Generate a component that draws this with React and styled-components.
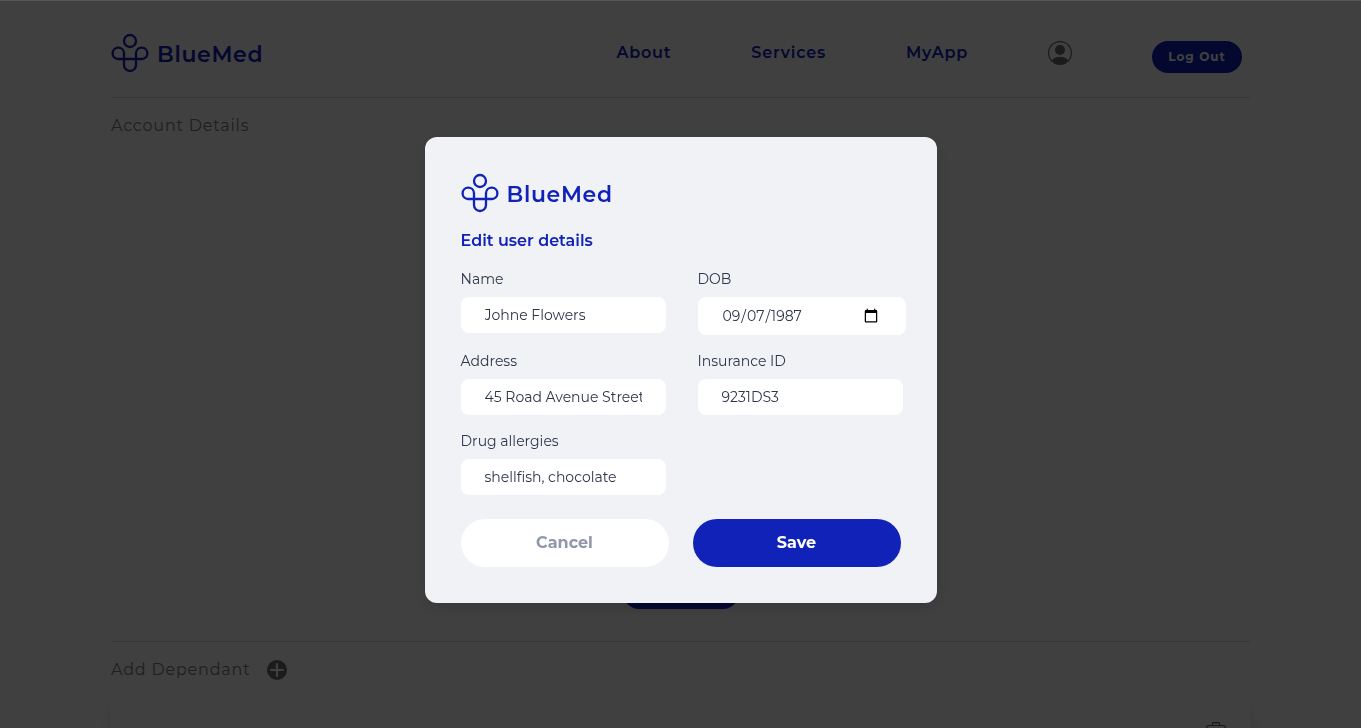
import React from "react";
import styled, { createGlobalStyle } from "styled-components";

const blue = "#1122b9";

const GlobalStyle = createGlobalStyle`
  *, *::before, *::after { box-sizing: border-box; }
  html, body { margin: 0; }
  body {
    background: #ffffff;
    color: #7c7c7c;
    font-family: Montserrat, Inter, "Liberation Sans", sans-serif;
    height: 100vh;
    overflow: hidden;
  }
  button, input { font-family: inherit; }
`;

const Page = styled.div`
  max-width: 1139px;
  margin: 0 auto;
`;

const Header = styled.header`
  display: flex;
  justify-content: space-between;
  align-items: center;
  height: 98px;
  padding: 8px 8px 0 0;
  border-bottom: 1px solid #dcdcdc;
`;

const Brand = styled.a`
  display: flex;
  align-items: center;
  gap: 8px;
  height: 40px;
  width: fit-content;
  color: ${blue};
  font-size: 22px;
  font-weight: 600;
  line-height: 28px;
  letter-spacing: 0.03em;
  text-decoration: none;
`;

const BrandName = styled.span`
  padding-top: 4px;
`;

const Nav = styled.nav`
  display: flex;
  align-items: center;
  gap: 80px;
`;

const NavLink = styled.a`
  display: flex;
  color: ${blue};
  font-size: 16px;
  font-weight: 600;
  letter-spacing: 0.05em;
  text-decoration: none;
`;

const LogOut = styled.button`
  width: 90px;
  height: 32px;
  margin-top: 8px;
  padding: 0;
  border: 0;
  border-radius: 16px;
  background: ${blue};
  color: #ffffff;
  font-size: 12px;
  font-weight: 700;
  letter-spacing: 1px;
`;

const Section = styled.section`
  display: flex;
  flex-direction: column;
  height: ${(p) => p.$height};
  border-bottom: ${(p) => (p.$ruled ? "1px solid #dcdcdc" : "0")};
`;

const SectionTitle = styled.h2`
  display: flex;
  align-items: center;
  gap: 16px;
  height: 56px;
  margin: 0;
  font-size: 16px;
  font-weight: 400;
  line-height: 20px;
  letter-spacing: 0.05em;
`;

const IconButton = styled.button`
  display: flex;
  padding: 0;
  border: 0;
  background: none;
  color: #6b6b6b;
`;

const EditButton = styled.button`
  width: 116px;
  height: 32px;
  margin: auto auto 32px;
  border: 0;
  border-radius: 16px;
  background: ${blue};
  color: #ffffff;
  font-size: 12px;
  font-weight: 700;
`;

const Card = styled.article`
  display: flex;
  justify-content: flex-end;
  height: 160px;
  padding: 24px;
  border-radius: 10px;
  box-shadow: 0 8px 14px rgba(0, 0, 0, 0.12);
`;

const Overlay = styled.div`
  position: fixed;
  inset: 0;
  display: flex;
  align-items: center;
  justify-content: center;
  padding-top: 10px;
  border-top: 1px solid #54555c;
  background: rgba(0, 0, 0, 0.75);
`;

const Modal = styled.form`
  width: 512px;
  padding: 36px;
  border-radius: 12px;
  background: #f0f2f6;
  box-shadow: 0 4px 16px rgba(0, 0, 0, 0.15);
  color: #2d3748;
`;

const ModalTitle = styled.h1`
  margin: 16px 0;
  color: ${blue};
  font-size: 16px;
  font-weight: 600;
  line-height: 24px;
`;

const Fields = styled.div`
  display: grid;
  grid-template-columns: 205px 208px;
  align-items: start;
  gap: 16px 32px;
  margin-bottom: 24px;
`;

const Field = styled.label`
  display: flex;
  flex-direction: column;
  align-items: flex-start;
  gap: 8px;
  font-size: 14px;
  line-height: 20px;
`;

const Input = styled.input`
  width: ${(p) => (p.type === "date" ? "208px" : "205px")};
  height: ${(p) => (p.type === "date" ? "38px" : "36px")};
  padding: 0 24px;
  border: 0;
  border-radius: 8px;
  background: #ffffff;
  color: #2d3748;
  font-size: 14px;

  &::-webkit-calendar-picker-indicator {
    box-sizing: content-box;
    width: 16px;
    height: 16px;
    padding: 3px;
    background-size: contain;
  }
`;

const Actions = styled.div`
  display: flex;
  gap: 24px;
`;

const Action = styled.button`
  width: 208px;
  height: 48px;
  border: 0;
  border-radius: 24px;
  background: ${(p) => (p.$primary ? blue : "#ffffff")};
  color: ${(p) => (p.$primary ? "#ffffff" : "#8f98a9")};
  font-size: 16px;
  font-weight: 700;
`;

function Logo() {
  return (
    <Brand href="#">
      <svg width="38" height="40" viewBox="0 0 38 40" fill="none" stroke="currentColor" strokeWidth="2.3">
        <circle cx="19" cy="8" r="6" />
        <path d="M13 26H7a5.700 5.700 0 1 1 6-6v12a6 6 0 0 0 12 0V20a5.700 5.700 0 1 1 6 6H13" />
      </svg>
      <BrandName>BlueMed</BrandName>
    </Brand>
  );
}

function UserIcon() {
  return (
    <svg width="24" height="24" viewBox="0 0 24 24" fill="#6b6b6b">
      <circle cx="12" cy="12" r="11.4" fill="none" stroke="#6b6b6b" strokeWidth="1.2" />
      <circle cx="12" cy="9" r="5" />
      <path d="M4 19.500C6 16.500 8 16 12 16s6 .5 8 3.500C18 22 15 23.400 12 23.400S6 22 4 19.500z" />
    </svg>
  );
}

function PlusIcon() {
  return (
    <svg width="20" height="20" viewBox="0 0 20 20">
      <circle cx="10" cy="10" r="10" fill="currentColor" />
      <path d="M10 4v12M4 10h12" stroke="#fff" strokeWidth="2.2" strokeLinecap="round" />
    </svg>
  );
}

function TrashIcon() {
  return (
    <svg width="20" height="24" viewBox="0 0 20 24" fill="none" stroke="currentColor" strokeWidth="1.2">
      <path d="M1 7V4.500Q1 3.500 2 3.500h16q1 0 1 1V7zM6.500 3.500V1.500q0-.9 1-.9h5q1 0 1 .9v2M3 7v15h14V7M7 10v9M10 10v9M13 10v9" />
    </svg>
  );
}

export default function App() {
  return (
    <>
      <GlobalStyle />
      <Page>
        <Header>
          <Logo />
          <Nav>
            <NavLink href="#">About</NavLink>
            <NavLink href="#">Services</NavLink>
            <NavLink href="#">MyApp</NavLink>
            <NavLink href="#" aria-label="Account"><UserIcon /></NavLink>
            <LogOut type="button">Log Out</LogOut>
          </Nav>
        </Header>
        <Section $height="544px" $ruled>
          <SectionTitle>Account Details</SectionTitle>
          <EditButton type="button" aria-label="Edit details" />
        </Section>
        <Section>
          <SectionTitle>
            Add Dependant
            <IconButton type="button" aria-label="Add dependant"><PlusIcon /></IconButton>
          </SectionTitle>
          <Card>
            <IconButton type="button" aria-label="Remove dependant"><TrashIcon /></IconButton>
          </Card>
        </Section>
      </Page>
      <Overlay>
        <Modal role="dialog" aria-modal="true" aria-labelledby="dialog-title">
          <Logo />
          <ModalTitle id="dialog-title">Edit user details</ModalTitle>
          <Fields>
            <Field>Name<Input type="text" defaultValue="Johne Flowers" /></Field>
            <Field>DOB<Input type="date" defaultValue="1987-09-07" /></Field>
            <Field>Address<Input type="text" defaultValue="45 Road Avenue Street" /></Field>
            <Field>Insurance ID<Input type="text" defaultValue="9231DS3" /></Field>
            <Field>Drug allergies<Input type="text" defaultValue="shellfish, chocolate" /></Field>
          </Fields>
          <Actions>
            <Action type="button">Cancel</Action>
            <Action type="submit" $primary>Save</Action>
          </Actions>
        </Modal>
      </Overlay>
    </>
  );
}
